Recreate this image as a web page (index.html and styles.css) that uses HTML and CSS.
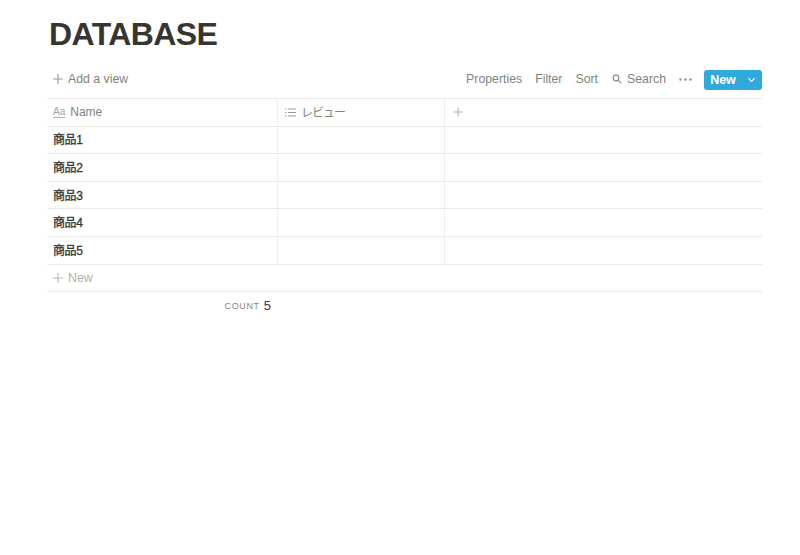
FILE: index.html
```html
<!DOCTYPE html>
<html lang="ja">
<head>
<meta charset="utf-8">
<title>DATABASE</title>
<link rel="stylesheet" href="styles.css">
</head>
<body>
<main class="page">
  <h1 class="title">DATABASE</h1>
  <div class="toolbar">
    <div class="add-view">
      <svg class="plus" viewBox="0 0 12 12"><path d="M6 1v10M1 6h10"/></svg>
      <span>Add a view</span>
    </div>
    <div class="actions">
      <span>Properties</span>
      <span>Filter</span>
      <span>Sort</span>
      <span class="search">
        <svg class="search-icon" viewBox="0 0 12 12"><circle cx="4.800" cy="4.800" r="3.400"/><path d="M7.300 7.300l3.700 3.700"/></svg>
        Search
      </span>
      <svg class="dots" viewBox="0 0 13 3"><circle cx="1.500" cy="1.500" r="1.300"/><circle cx="6.500" cy="1.500" r="1.300"/><circle cx="11.500" cy="1.500" r="1.300"/></svg>
      <div class="new-btn">
        <span class="new-label">New</span>
        <span class="new-caret"><svg viewBox="0 0 10 6"><path d="M1.500 1l3.500 3.500L8.500 1"/></svg></span>
      </div>
    </div>
  </div>
  <div class="table">
    <div class="row head">
      <div class="cell c1">
        <span class="aa">Aa</span><span>Name</span>
      </div>
      <div class="cell c2">
        <svg class="list" viewBox="0 0 11 9"><path d="M3 1h8M3 4.500h8M3 8h8M0 1h1.500M0 4.500h1.500M0 8h1.500"/></svg><span class="kana">レビュー</span>
      </div>
      <div class="cell c3">
        <svg class="plus small" viewBox="0 0 12 12"><path d="M6 1.500v9M1.500 6h9"/></svg>
      </div>
    </div>
    <div class="row"><div class="cell c1 name">商品1</div><div class="cell c2"></div><div class="cell c3"></div></div>
    <div class="row"><div class="cell c1 name">商品2</div><div class="cell c2"></div><div class="cell c3"></div></div>
    <div class="row"><div class="cell c1 name">商品3</div><div class="cell c2"></div><div class="cell c3"></div></div>
    <div class="row"><div class="cell c1 name">商品4</div><div class="cell c2"></div><div class="cell c3"></div></div>
    <div class="row"><div class="cell c1 name">商品5</div><div class="cell c2"></div><div class="cell c3"></div></div>
    <div class="new-row">
      <svg class="plus faint" viewBox="0 0 12 12"><path d="M6 1v10M1 6h10"/></svg>
      <span>New</span>
    </div>
  </div>
  <div class="footer">
    <span class="count-label">COUNT</span><span class="count-value">5</span>
  </div>
</main>
</body>
</html>
```
FILE: styles.css
```css
* { box-sizing: border-box; }
html, body { margin: 0; background: #fff; }
body {
  font-family: "Liberation Sans", "Noto Sans CJK JP", sans-serif;
  color: #37352f;
}
.page {
  width: 800px;
  height: 555px;
  padding: 0 38px 0 47px;
  overflow: hidden;
}
.title {
  margin: 0;
  padding: 16px 0 0 2px;
  height: 62px;
  font-size: 32px;
  line-height: 36px;
  font-weight: 700;
  letter-spacing: -0.600px;
  color: #37352f;
}
.toolbar {
  height: 36px;
  padding-bottom: 2px;
  display: flex;
  align-items: center;
  justify-content: space-between;
  font-size: 12.300px;
  color: #83827e;
}
.add-view { display: flex; align-items: center; gap: 4px; padding-left: 5px; }
.plus { width: 12px; height: 12px; fill: none; stroke: #9b9a97; stroke-width: 1.100; }
.plus.small { stroke: #b3b2af; }
.plus.faint { stroke: #b8b7b4; }
.actions { display: flex; align-items: center; gap: 13px; }
.search { display: flex; align-items: center; gap: 5px; }
.search-icon { width: 10px; height: 10px; margin-left: 1px; fill: none; stroke: #8a8985; stroke-width: 1.400; }
.dots { width: 13px; height: 3px; fill: #9b9a97; }
.new-btn {
  display: flex;
  height: 20px;
  width: 58px;
  margin: 2px 0 0 -1px;
  border-radius: 3px;
  background: #2eaadc;
  color: #fff;
  font-size: 12.500px;
  font-weight: 700;
  align-items: center;
}
.new-label { width: 38px; text-align: center; }
.new-caret { flex: 1; display: flex; justify-content: center; }
.new-caret svg { width: 9px; height: 6px; fill: none; stroke: #fff; stroke-width: 1.300; margin-right: 2px; }
.table { border-top: 1px solid #e9e9e8; }
.row {
  display: flex;
  height: 27.600px;
  border-bottom: 1px solid #e9e9e8;
}
.cell { display: flex; align-items: center; border-right: 1px solid #eeeeed; font-size: 12px; }
.c1 { width: 231px; padding-left: 6px; }
.c2 { width: 167px; padding-left: 7px; }
.c3 { flex: 1; border-right: 0; padding-left: 7px; }
.head .cell { color: #83827e; }
.kana { font-size: 12px; letter-spacing: -1px; margin: -1px 0 0 -1px; }
.aa {
  font-size: 10px;
  line-height: 11px;
  color: #a5a4a1;
  border-bottom: 1px solid #b3b2af;
  margin-right: 5px;
}
.list { width: 11px; height: 9px; fill: none; stroke: #9b9a97; stroke-width: 1; margin-right: 6px; }
.name { font-size: 12px; letter-spacing: -0.400px; color: #37352f; padding-bottom: 2px; -webkit-text-stroke: 0.300px #37352f; }
.new-row {
  height: 27px;
  display: flex;
  align-items: center;
  gap: 4px;
  padding-left: 5px;
  font-size: 12.300px;
  color: #b0afac;
  border-bottom: 1px solid #e9e9e8;
}
.footer {
  width: 231px;
  height: 28px;
  display: flex;
  justify-content: flex-end;
  align-items: center;
  gap: 4px;
  padding-right: 7px;
}
.count-label { font-size: 9px; letter-spacing: 0.650px; color: #8a8985; }
.count-value { font-size: 13px; color: #37352f; }
```
